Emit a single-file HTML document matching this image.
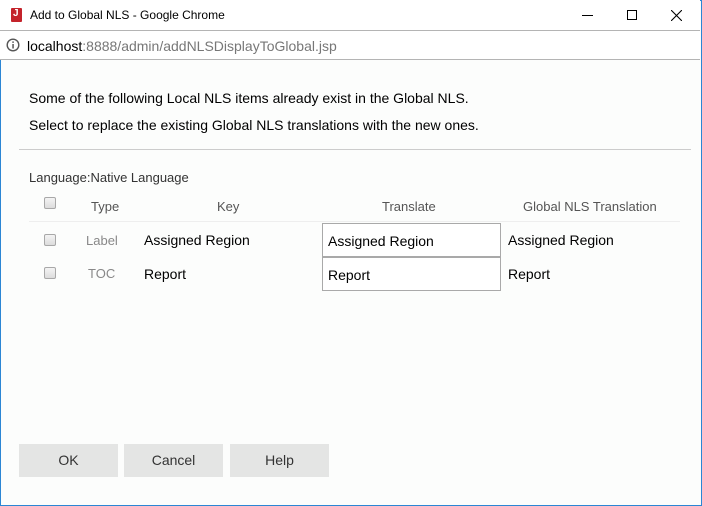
<!DOCTYPE html>
<html><head><meta charset="utf-8"><style>
*{margin:0;padding:0;box-sizing:border-box}
body{width:702px;height:506px;overflow:hidden;font-family:"Liberation Sans",sans-serif;background:#fcfdfc;position:relative}
.win{position:absolute;left:0;top:0;width:702px;height:506px;border:1px solid #2b86d4;border-top:1px solid #2b86d4}
.tb{position:absolute;left:0;top:0;width:700px;height:30px;background:#fff}
.ab{position:absolute;left:0;top:30px;width:700px;height:30px;background:#fff;border-top:1px solid #b4b4b4;border-bottom:1px solid #b4b4b4}
.t{position:absolute;white-space:nowrap}
.cb{position:absolute;width:12px;height:12px;border:1px solid #a8a8a8;border-radius:2px;background:linear-gradient(#f4f4f4,#dcdcdc)}
.inp{position:absolute;width:179px;height:34px;border:1px solid #a9a9a9;background:#fff;font-size:14px;padding:9px 0 0 5px;color:#000}
.btn{position:absolute;top:444px;width:99px;height:33px;background:#e4e5e4;font-size:14px;color:#333;text-align:center;line-height:33px}
</style></head><body>
<div class="win"></div>
<div class="tb">
 <div style="position:absolute;left:11px;top:8px;width:11px;height:14px;background:#c4232b;border-radius:1px"></div>
 <div class="t" style="left:13px;top:8px;font-size:10px;color:#fff;font-weight:bold">J</div>
 <div class="t" style="left:30px;top:8px;font-size:12px;color:#000">Add to Global NLS - Google Chrome</div>
 <div style="position:absolute;left:582px;top:15px;width:11px;height:1px;background:#000"></div>
 <div style="position:absolute;left:627px;top:10px;width:10px;height:10px;border:1px solid #000"></div>
 <svg style="position:absolute;left:671px;top:10px" width="11" height="11"><path d="M0 0L11 11M11 0L0 11" stroke="#000" stroke-width="1.1"/></svg>
</div>
<div class="ab">
 <svg style="position:absolute;left:6px;top:7px" width="14" height="14"><circle cx="7" cy="7" r="5.8" fill="none" stroke="#555" stroke-width="1.4"/><rect x="6.3" y="6" width="1.5" height="4.5" fill="#555"/><rect x="6.3" y="3.4" width="1.5" height="1.5" fill="#555"/></svg>
 <div class="t" style="left:27px;top:7px;font-size:14px;color:#000">localhost<span style="color:#777">:8888/admin/addNLSDisplayToGlobal.jsp</span></div>
</div>
<div class="t" style="left:29px;top:90px;font-size:14px;color:#000">Some of the following Local NLS items already exist in the Global NLS.</div>
<div class="t" style="left:29px;top:117px;font-size:14px;color:#000">Select to replace the existing Global NLS translations with the new ones.</div>
<div style="position:absolute;left:19px;top:149px;width:672px;height:1px;background:#ccc"></div>
<div class="t" style="left:29px;top:170px;font-size:13px;color:#333">Language:Native Language</div>
<div class="cb" style="left:44px;top:197px"></div>
<div class="t" style="left:91px;top:199px;font-size:13px;color:#555">Type</div>
<div class="t" style="left:217px;top:199px;font-size:13px;color:#555">Key</div>
<div class="t" style="left:382px;top:199px;font-size:13px;color:#555">Translate</div>
<div class="t" style="left:523px;top:199px;font-size:13px;color:#555">Global NLS Translation</div>
<div style="position:absolute;left:29px;top:221px;width:651px;height:1px;background:#eee"></div>
<div class="cb" style="left:44px;top:234px"></div>
<div class="t" style="left:86px;top:233px;font-size:13px;color:#888">Label</div>
<div class="t" style="left:144px;top:232px;font-size:14px;color:#000">Assigned Region</div>
<div class="inp" style="left:322px;top:223px">Assigned Region</div>
<div class="t" style="left:508px;top:232px;font-size:14px;color:#000">Assigned Region</div>
<div class="cb" style="left:44px;top:267px"></div>
<div class="t" style="left:88px;top:266px;font-size:13px;color:#888">TOC</div>
<div class="t" style="left:144px;top:266px;font-size:14px;color:#000">Report</div>
<div class="inp" style="left:322px;top:257px">Report</div>
<div class="t" style="left:508px;top:266px;font-size:14px;color:#000">Report</div>
<div class="btn" style="left:19px">OK</div>
<div class="btn" style="left:124px">Cancel</div>
<div class="btn" style="left:230px">Help</div>
</body></html>
